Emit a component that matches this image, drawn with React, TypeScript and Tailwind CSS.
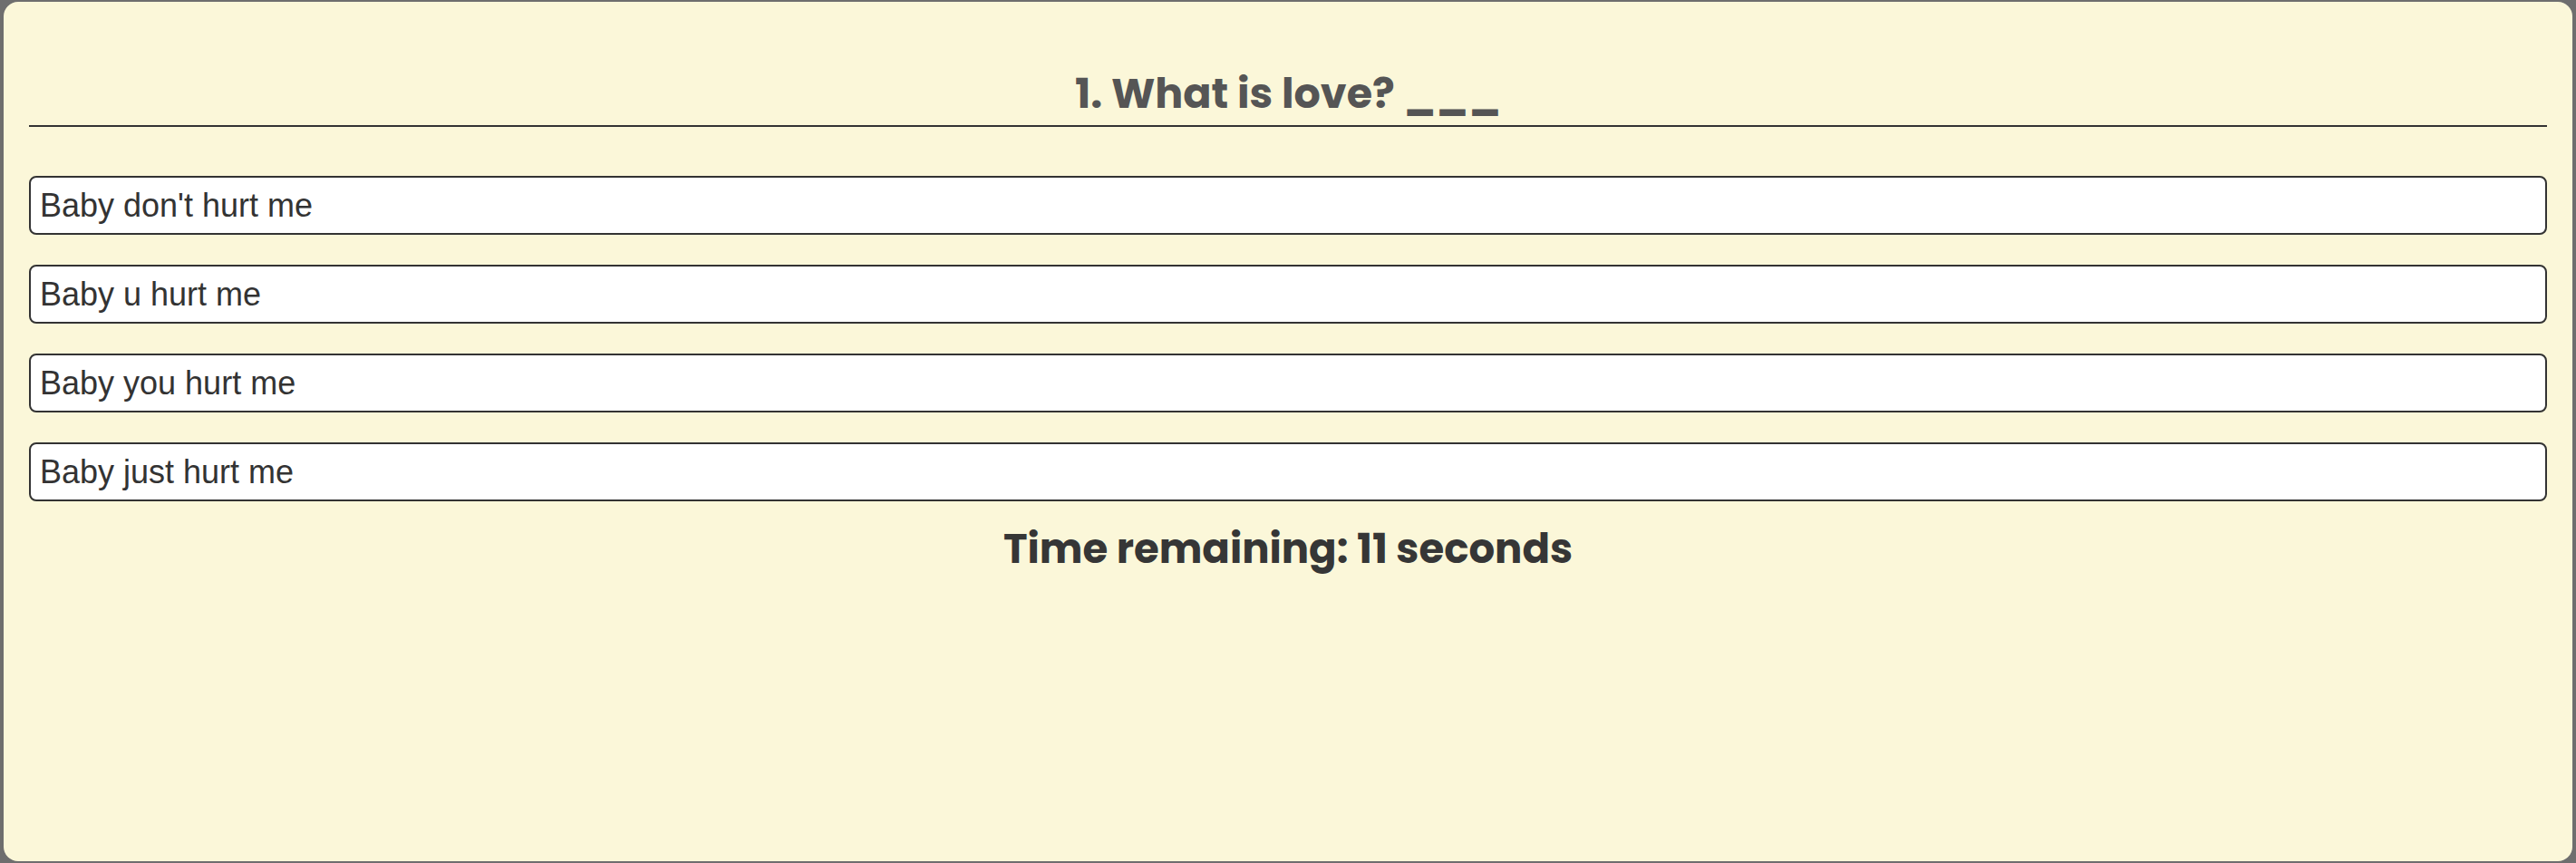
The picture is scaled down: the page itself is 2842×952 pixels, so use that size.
const options = [
  "Baby don't hurt me",
  "Baby u hurt me",
  "Baby you hurt me",
  "Baby just hurt me",
];

export default function App() {
  return (
    <div className="h-[952px] w-full bg-[#6e6e6e] px-[4px] py-[2px]">
      <div className="flex h-full flex-col rounded-[16px] bg-[#fbf7d9] px-[28px] pt-[73px]">
        <h1
          className="text-center text-[46px] leading-[56px] font-bold text-[#555555]"
          style={{ fontFamily: "Poppins, Inter, sans-serif" }}
        >
          1. What is love? ___
        </h1>
        <hr className="mt-[7px] border-t-2 border-[#333333]" />
        <div className="mt-[54px] flex flex-col gap-[33px]">
          {options.map((opt) => (
            <button
              key={opt}
              className="rounded-[8px] border-2 border-[#333333] bg-white px-[10px] py-[10px] text-left text-[36px] leading-[41px] text-[#333333]"
              style={{ fontFamily: "'Liberation Sans', Arial, sans-serif" }}
            >
              {opt}
            </button>
          ))}
        </div>
        <h2
          className="mt-[23px] text-center text-[45px] leading-[60px] font-bold text-[#363636]"
          style={{ fontFamily: "Poppins, Inter, sans-serif" }}
        >
          Time remaining: 11 seconds
        </h2>
      </div>
    </div>
  );
}
